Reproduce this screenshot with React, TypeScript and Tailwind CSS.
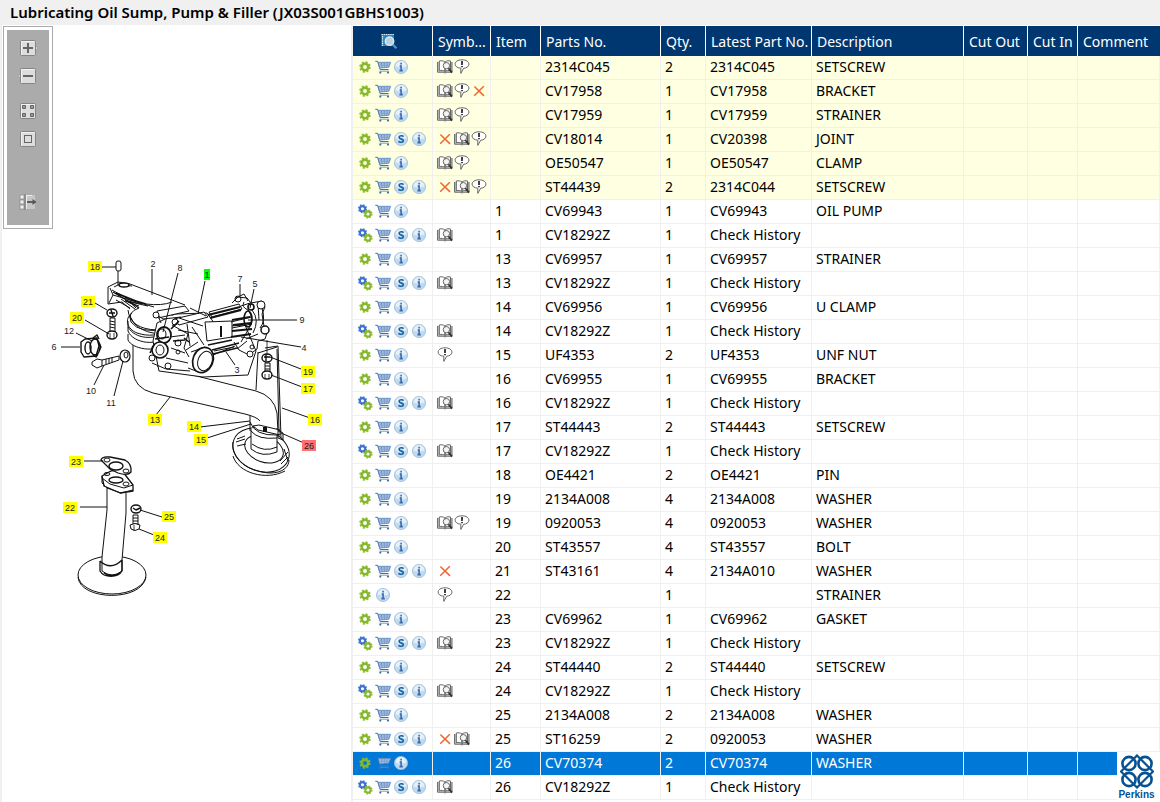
import type { ReactNode } from "react";

type Part = {
  actions: string;
  symbols?: string;
  item?: string;
  no: string;
  qty: string;
  latest: string;
  desc?: string;
  tone?: "note" | "selected";
};

// actions: g = gear, b = double gear, c = cart, s = supersession, i = info
// symbols: k = book, n = note, x = cross
const PARTS: Part[] = [
  { actions: "gci",  symbols: "kn",  no: "2314C045", qty: "2", latest: "2314C045", desc: "SETSCREW", tone: "note" },
  { actions: "gci",  symbols: "knx", no: "CV17958",  qty: "1", latest: "CV17958",  desc: "BRACKET",  tone: "note" },
  { actions: "gci",  symbols: "kn",  no: "CV17959",  qty: "1", latest: "CV17959",  desc: "STRAINER", tone: "note" },
  { actions: "gcsi", symbols: "xkn", no: "CV18014",  qty: "1", latest: "CV20398",  desc: "JOINT",    tone: "note" },
  { actions: "gci",  symbols: "kn",  no: "OE50547",  qty: "1", latest: "OE50547",  desc: "CLAMP",    tone: "note" },
  { actions: "gcsi", symbols: "xkn", no: "ST44439",  qty: "2", latest: "2314C044", desc: "SETSCREW", tone: "note" },
  { actions: "bci",  item: "1",  no: "CV69943",  qty: "1", latest: "CV69943", desc: "OIL PUMP" },
  { actions: "bcsi", symbols: "k", item: "1",  no: "CV18292Z", qty: "1", latest: "Check History" },
  { actions: "gci",  item: "13", no: "CV69957",  qty: "1", latest: "CV69957", desc: "STRAINER" },
  { actions: "bcsi", symbols: "k", item: "13", no: "CV18292Z", qty: "1", latest: "Check History" },
  { actions: "gci",  item: "14", no: "CV69956",  qty: "1", latest: "CV69956", desc: "U CLAMP" },
  { actions: "bcsi", symbols: "k", item: "14", no: "CV18292Z", qty: "1", latest: "Check History" },
  { actions: "gci",  symbols: "n", item: "15", no: "UF4353",   qty: "2", latest: "UF4353",  desc: "UNF NUT" },
  { actions: "gci",  item: "16", no: "CV69955",  qty: "1", latest: "CV69955", desc: "BRACKET" },
  { actions: "bcsi", symbols: "k", item: "16", no: "CV18292Z", qty: "1", latest: "Check History" },
  { actions: "gci",  item: "17", no: "ST44443",  qty: "2", latest: "ST44443", desc: "SETSCREW" },
  { actions: "bcsi", symbols: "k", item: "17", no: "CV18292Z", qty: "1", latest: "Check History" },
  { actions: "gci",  item: "18", no: "OE4421",   qty: "2", latest: "OE4421",  desc: "PIN" },
  { actions: "gci",  item: "19", no: "2134A008", qty: "4", latest: "2134A008", desc: "WASHER" },
  { actions: "gci",  symbols: "kn", item: "19", no: "0920053", qty: "4", latest: "0920053", desc: "WASHER" },
  { actions: "gci",  item: "20", no: "ST43557",  qty: "4", latest: "ST43557", desc: "BOLT" },
  { actions: "gcsi", symbols: "x", item: "21", no: "ST43161", qty: "4", latest: "2134A010", desc: "WASHER" },
  { actions: "gi",   symbols: "n", item: "22", no: "", qty: "1", latest: "", desc: "STRAINER" },
  { actions: "gci",  item: "23", no: "CV69962",  qty: "1", latest: "CV69962", desc: "GASKET" },
  { actions: "bcsi", symbols: "k", item: "23", no: "CV18292Z", qty: "1", latest: "Check History" },
  { actions: "gci",  item: "24", no: "ST44440",  qty: "2", latest: "ST44440", desc: "SETSCREW" },
  { actions: "bcsi", symbols: "k", item: "24", no: "CV18292Z", qty: "1", latest: "Check History" },
  { actions: "gci",  item: "25", no: "2134A008", qty: "2", latest: "2134A008", desc: "WASHER" },
  { actions: "gcsi", symbols: "xk", item: "25", no: "ST16259", qty: "2", latest: "0920053", desc: "WASHER" },
  { actions: "gci",  item: "26", no: "CV70374",  qty: "2", latest: "CV70374", desc: "WASHER", tone: "selected" },
  { actions: "bcsi", symbols: "k", item: "26", no: "CV18292Z", qty: "1", latest: "Check History" },
];

const HEADERS = ["Symb...", "Item", "Parts No.", "Qty.", "Latest Part No.", "Description", "Cut Out", "Cut In", "Comment"];

const CALLOUTS: [string, number, number, string?][] = [
  ["18", 95, 267, "#ff0"], ["21", 88, 302, "#ff0"], ["20", 77, 318, "#ff0"], ["13", 155, 420, "#ff0"],
  ["14", 194, 427, "#ff0"], ["15", 201, 440, "#ff0"], ["19", 308, 372, "#ff0"], ["17", 308, 389, "#ff0"],
  ["16", 315, 420, "#ff0"], ["26", 309, 446, "#ff7070"], ["23", 76, 462, "#ff0"], ["22", 70, 508, "#ff0"],
  ["25", 169, 517, "#ff0"], ["24", 160, 538, "#ff0"], ["1", 207, 275, "#0f0"],
  ["2", 153, 264], ["8", 180, 268], ["7", 240, 279], ["5", 255, 284], ["9", 302, 320], ["4", 304, 348],
  ["3", 237, 370], ["12", 69, 331], ["6", 54, 347], ["10", 91, 391], ["11", 111, 403],
];

function Icon({ children }: { children: ReactNode }) {
  return (
    <svg viewBox="0 0 16 16" className="size-4 shrink-0" aria-hidden="true">
      {children}
    </svg>
  );
}

function GearShape({ cx, cy, r, color }: { cx: number; cy: number; r: number; color: string }) {
  return (
    <g stroke={color}>
      <circle cx={cx} cy={cy} r={r * 0.58} fill="none" strokeWidth={r * 0.46} />
      <circle cx={cx} cy={cy} r={r * 0.88} fill="none" strokeWidth={r * 0.28} strokeDasharray={`${r * 0.36} ${r * 0.331}`} />
    </g>
  );
}

function InfoDisc({ children }: { children: ReactNode }) {
  return (
    <Icon>
      <circle cx="8" cy="8" r="6.6" fill="#bfdaef" stroke="#9dbddb" strokeWidth="0.8" />
      <path d="M2.6 7.4a5.4 5.4 0 0 1 10.8 0c-3.4 1.4-7 1.4-10.8 0z" fill="#e4f0fa" />
      {children}
    </Icon>
  );
}

function ActionIcon({ kind }: { kind: string }) {
  if (kind === "g") return <Icon><GearShape cx={8} cy={8} r={5.6} color="#87b82b" /></Icon>;
  if (kind === "b") {
    return (
      <Icon>
        <GearShape cx={5.5} cy={5.7} r={4.5} color="#3f72cf" />
        <GearShape cx={11} cy={11} r={4.5} color="#87b82b" />
      </Icon>
    );
  }
  if (kind === "c") {
    return (
      <Icon>
        <path d="M.3 2.3h2.3l2.6 8.200h8.400" fill="none" stroke="#44709f" strokeWidth="1" />
        <path d="M3.200 3.300h12.500l-1.900 4.900-9.200.8z" fill="#b4d0ee" stroke="#4d7dbd" strokeWidth="0.800" />
        <path d="M3.600 5h11.300M4.100 6.800h10.100M6.400 3.400l.5 5.300M9.200 3.400l.1 5M12.200 3.400l-.5 4.900" fill="none" stroke="#6483b5" strokeWidth="0.600" />
        <path d="M4.600 12.200h9.200" stroke="#6d93bd" strokeWidth="0.900" />
        <circle cx="5.300" cy="13.600" r="1.100" fill="#44709f" />
        <circle cx="13" cy="13.600" r="1.100" fill="#44709f" />
      </Icon>
    );
  }
  if (kind === "s") {
    return (
      <InfoDisc>
        <path d="M10.600 5.600C9.600 4.400 6.200 4.300 6.100 6.200c0 2.100 4.200 1.300 4.200 3.500-.1 2-3.500 1.900-4.800.7" fill="none" stroke="#17629b" strokeWidth="1.700" />
      </InfoDisc>
    );
  }
  return (
    <InfoDisc>
      <path d="M8.100 3.800v1.700M6.700 7.100h1.400v4.600M6.400 11.600h3.400" fill="none" stroke="#3d6ba8" strokeWidth="1.600" />
    </InfoDisc>
  );
}

function SymbolIcon({ kind }: { kind: string }) {
  if (kind === "x") {
    return (
      <Icon>
        <path d="M3.400 3.500l9.600 9.400M12.800 3.300l-9.600 9.400" stroke="#f2662d" strokeWidth="1.500" />
      </Icon>
    );
  }
  if (kind === "n") {
    return (
      <Icon>
        <path d="M8 .8c4.200 0 6.900 1.900 6.900 4.300 0 2.400-2.300 3.900-5.300 4.200L6.800 14.400V9.200C3.400 8.900 1.100 7.500 1.100 5.100 1.100 2.700 3.800.8 8 .8z" fill="#fff" stroke="#555" strokeWidth="0.900" />
        <path d="M8 2v4M8 6.900v1.400" stroke="#222" strokeWidth="1.700" />
      </Icon>
    );
  }
  return (
    <Icon>
      <path d="M.6 3v10.200h5.600l1.800.8 1.800-.8h5.200V3" fill="#ccc" stroke="#666" strokeWidth="1" />
      <path d="M2.300 2c2-.5 4-.3 5.700 1.100v9.300c-1.700-1-3.700-1.200-5.700-.8zM8 3.100c1.500-1.400 3.500-1.600 5.500-1.100v9.600c-2-.4-4-.2-5.500.8z" fill="#fff" stroke="#555" strokeWidth="0.900" />
      <circle cx="9.400" cy="6.700" r="3.200" fill="#f4f4f4" stroke="#666" strokeWidth="1" />
      <path d="M11.500 9.200l3.500 4.400" stroke="#333" strokeWidth="1.800" />
    </Icon>
  );
}

function PreviewIcon() {
  return (
    <svg viewBox="0 0 18 18" className="size-[18px]" aria-hidden="true">
      <path d="M1.500 2h12.500v12h-12.500z" fill="#2c86bd" />
      <path d="M1.500 2.500h12.500M2.500 4v10" stroke="#e4f2fa" strokeWidth="1.200" strokeDasharray="1.400 .8" />
      <circle cx="9.500" cy="9.200" r="4.200" fill="#b7d3e3" stroke="#e6e6e6" strokeWidth="1.400" />
      <path d="M12.800 12.600l3.600 3.700" stroke="#4c9ad0" strokeWidth="2.200" />
    </svg>
  );
}

function ToolButton({ label, className = "", children }: { label: string; className?: string; children: ReactNode }) {
  return (
    <button type="button" aria-label={label} className={`flex size-5 items-center justify-center ${className}`}>
      <svg viewBox="0 0 20 20" className="size-5" aria-hidden="true">
        {children}
      </svg>
    </button>
  );
}

function ToolFace() {
  return (
    <>
      <rect x="2.500" y="2.500" width="15" height="15" rx="1" fill="#ddd" stroke="#858585" />
      <path d="M3.500 16.500v-13h13" fill="none" stroke="#f2f2f2" />
    </>
  );
}

function Toolbar() {
  return (
    <div className="ml-px w-[50px] border border-[#ababab] bg-white p-[3px]">
      <div className="flex h-[195px] flex-col items-center bg-[#ababab] pt-2">
        <ToolButton label="Zoom in">
          <path d="M17 7.500l2.700 2.500-2.700 2.500z" fill="#eee" stroke="#888" strokeWidth="0.600" />
          <ToolFace />
          <path d="M5 10h10M10 5v10" stroke="#666" strokeWidth="2" />
        </ToolButton>
        <ToolButton label="Zoom out" className="mt-2">
          <path d="M3 7.500l-2.700 2.500 2.700 2.500z" fill="#eee" stroke="#888" strokeWidth="0.600" />
          <ToolFace />
          <path d="M5 10h10" stroke="#666" strokeWidth="2" />
        </ToolButton>
        <ToolButton label="Fit to window" className="mt-[15px]">
          <ToolFace />
          <path d="M4.500 4.500h3v3h-3zM12.500 4.500h3v3h-3zM4.500 12.500h3v3h-3zM12.500 12.500h3v3h-3z" fill="#999" stroke="#666" />
        </ToolButton>
        <ToolButton label="Actual size" className="mt-2">
          <ToolFace />
          <rect x="6.500" y="6.500" width="7" height="7" fill="#ddd" stroke="#666" />
        </ToolButton>
        <ToolButton label="Hide panel" className="mt-[43px]">
          <path d="M8 3h9v14H8z" fill="#c6c6c6" />
          <path d="M2 3h4v4H2zM2 8h4v4H2zM2 13h4v4H2z" fill="#eee" stroke="#888" strokeWidth="0.700" />
          <path d="M7 2v16" stroke="#777" />
          <path d="M8 3.500h6M8.500 3v14" stroke="#eee" />
          <path d="M9 10h6" stroke="#555" strokeWidth="1.800" />
          <path d="M14.500 7l4 3-4 3z" fill="#555" />
        </ToolButton>
      </div>
    </div>
  );
}

function Diagram() {
  return (
    <svg viewBox="50 250 280 350" className="mt-[21px] ml-12 h-[350px] w-[280px]" role="img" aria-label="Exploded parts diagram">
      <g fill="none" stroke="#111" strokeWidth="1" strokeLinejoin="round">
        {/* suction pipe 13 */}
        <path d="M133 345v26q1 17 20 22l27 6 65 15q12 3 15 7M157 366l99 25q18 5 21 22l1 20" fill="#fff" />
        {/* strainer foot */}
        <ellipse cx="261" cy="450" rx="29" ry="21" transform="rotate(20 261 450)" fill="#fff" />
        <path d="M233 456c5 17 33 25 52 15M233 442c-2 17 15 30 37 31 14 0 19-7 19-13" />
        <ellipse cx="264" cy="449" rx="20" ry="13" transform="rotate(20 264 449)" />
        <path d="M237 439l8-3M236 442l9-3M237 446l9-2M280 461l8-9M281 464l7-7M284 449l4 12" />
        <path d="M251 428v21q11 9 26 3v-24" fill="#fff" />
        <path d="M250 422q5 14 27 13M251 431q7 9 26 7M250 415v16M252 444q12 9 25 3" />
        <path d="M253 426l5 4 22 5v-5l-21-5z" fill="#fff" />
        <path d="M264 427v5M266 427v5" strokeWidth="2" />
        {/* bracket 16 */}
        <path d="M258 352l-2 38M265 348l13-2 3 92M277 349l2 83M258 353l19-6M278 430l5 3v7l-5-2z" />
        {/* pump body 2 */}
        <path d="M108 287l10-5 12 2 58 22 2 14-12 27-45-1-1-36-8-9-16 2z" fill="#fff" stroke="none" />
        <path d="M108 304v-17l10-5 12 2 55 21M108 304l14-2 8 7" />
        <path d="M110 288l3 7 41 12M113 295l-4 8M122 283l-8 4M112 290l18 10 9 2M116 300l14 8M121 299l14 10M125 301l14 5M122 285l10 1" />
        <path d="M113 292l20 12 6 4M116 293l20 8 10 3" strokeWidth="1.400" />
        <path d="M125 300q8 4 11 8M128 301l14 3M130 302l18 4M128 310q2 19 29 20M130 316q5 15 28 18" />
        <ellipse cx="124" cy="285" rx="5" ry="2" fill="#fff" strokeWidth="1.500" />
        <path d="M132 313c-8 6-5 16 5 20 12 4 22 2 28-2M128 321v10c5 13 32 16 39 3M128 327c7 12 26 14 39 4M128 334v6c4 9 27 13 38 4" />
        <path d="M139 308q-12 4-8 14 9 12 33 7M146 304q16 2 26-2" />
        {/* pump housing */}
        <path d="M153 341l4-18 18-9 32-1 10 14 28-2 11 26-8 24-45 2-44-6z" fill="#fff" />
        <path d="M157 311l28-5 4 5-31 7zM174 319l30-7 4 5-29 8zM154 313l9 6 18-2M159 318l2 5M179 318l24 8M190 308l16 8" fill="#fff" />
        <circle cx="156" cy="315" r="3" fill="#fff" /><circle cx="175" cy="322" r="3" fill="#fff" />
        <ellipse cx="164" cy="335" rx="7" ry="8" fill="#fff" strokeWidth="1.800" />
        <ellipse cx="162" cy="334" rx="4" ry="5" />
        <ellipse cx="160" cy="350" rx="8" ry="8" fill="#fff" strokeWidth="1.600" />
        <ellipse cx="160" cy="350" rx="4" ry="5" />
        <circle cx="152" cy="358" r="3" fill="#fff" /><circle cx="168" cy="366" r="3" fill="#fff" />
        <circle cx="178" cy="343" r="3" /><circle cx="178" cy="352" r="2" />
        <path d="M152 363l14 6 24 2M172 325l16 9-4 14 5 9M170 337l15-2M171 348l14 5M187 324l3 22M192 327l12 18M178 330l20 4M186 350l12-8M166 358l22 5" />
        <path d="M155 339l14-2M154 345l-4 8M171 329l8-8M173 341l12-1M184 338l5 4" strokeWidth="1.600" />
        <ellipse cx="203" cy="360" rx="10" ry="13" transform="rotate(22 203 360)" fill="#fff" strokeWidth="1.700" />
        <ellipse cx="205" cy="361" rx="7" ry="10" transform="rotate(22 205 361)" />
        <path d="M191 352l14-5M196 371l-8-3M213 355l22-9M214 351l20-4" />
        {/* rotor and end plate */}
        <path d="M205 322l27-1v16l-25 4z" fill="#fff" />
        <path d="M221 326v11" strokeWidth="2" />
        <path d="M208 315l32-8M210 318l31-8M232 320l18-3M233 325l18-2M232 331l20-2M231 337l20-3" strokeWidth="2" />
        <path d="M231 322l20-5M232 328l20-4M209 312l30-8 3 5-30 8z" />
        <path d="M232 303l6-6 9 1 4 5 11-2 3 6-3 7 2 12 4 4-3 9-7 2-1 8-8 6-10-5-5-8" />
        <path d="M244 302q-3 5 4 8 7 9 0 20l-7 12M252 310q8 10 1 23M258 304l1 16M262 308q4 13-2 20M241 306l9-3M246 339l12-5M236 298l8-4 4 7M237 349l10-8" />
        <circle cx="238" cy="299" r="3" /><circle cx="251" cy="307" r="3" strokeWidth="1.600" /><circle cx="261" cy="305" r="4" fill="#fff" />
        <circle cx="265" cy="330" r="4" fill="#fff" strokeWidth="1.500" /><circle cx="250" cy="354" r="3" fill="#fff" /><circle cx="252" cy="347" r="2" />
        <ellipse cx="248" cy="319" rx="4" ry="8" strokeWidth="1.600" />
        <path d="M213 354l24-6M212 350l27-7M208 345l24-5" strokeWidth="1.500" />
        {/* small hardware */}
        <rect x="116" y="261" width="5" height="10" rx="2" fill="#fff" />
        <path d="M118 271v14" />
        <g strokeWidth="1.400">
          <ellipse cx="112" cy="313" rx="5" ry="4" fill="#fff" /><path d="M109 313h6M111 310l2 6" />
          <path d="M110 318v14h5v-14zM110 321l5 1M110 324l5 1M110 327l5 1" strokeWidth="1" />
          <ellipse cx="112" cy="335" rx="5" ry="4" fill="#fff" /><path d="M110 333v5M114 333v5" strokeWidth="0.800" />
          <path d="M81 342l4-3 12-1 2 8-3 10-12 1-3-5z" fill="#fff" />
          <ellipse cx="88" cy="348" rx="3" ry="6" /><ellipse cx="95" cy="347" rx="5" ry="8" /><path d="M93 338l4-3 2 4M93 355l3 2 2-3M99 343l2 4-2 4" />
          <path d="M92 362l5-3 5 1 17-4v4l-17 6-5 2-5-3zM102 360v6M106 359v5M109 358v5M112 357v5" strokeWidth="1" />
          <ellipse cx="125" cy="356" rx="5" ry="6" fill="#fff" strokeWidth="1.200" /><ellipse cx="126" cy="355" rx="2" ry="3" strokeWidth="1" />
          <ellipse cx="267" cy="358" rx="5" ry="4" fill="#fff" /><path d="M264 357h6M266 355v6" />
          <path d="M265 363v9h5v-9zM265 366h5M265 369h5" strokeWidth="1" />
          <ellipse cx="267" cy="375" rx="5" ry="4" fill="#fff" /><path d="M267 340v15M265 374v4M269 374v4" strokeWidth="0.800" />
          <ellipse cx="136" cy="509" rx="5" ry="4" fill="#fff" /><path d="M133 508l3 2 4-2" />
          <path d="M133 515v9h5v-9zM133 518h5M133 521h5" strokeWidth="1" />
          <path d="M130 525q5-3 10 0l-1 4q-4 3-8 0z" fill="#fff" strokeWidth="1" /><path d="M134 525v6" strokeWidth="0.800" />
        </g>
        {/* strainer 22 and gasket 23 */}
        <ellipse cx="112" cy="575" rx="34" ry="19" fill="#fff" />
        <path d="M78 577c2 24 64 25 68 0" />
        <path d="M107 485v25l-5 47v14q10 8 20 0v-11l4-47v-20" fill="#fff" />
        <path d="M100 561v10c4 7 18 7 22 0v-11M100 561q11 10 22-1M104 573q8 5 16 0" strokeWidth="1.300" />
        <path d="M102 476l7-4q4-3 14 0l10 13v6l-13 2-16-7z" fill="#fff" strokeWidth="1.300" />
        <path d="M102 476v7l5 5 14 5 12-3M102 478l8 6 14 4 9-3" />
        <path d="M101 460q1-4 9-3l15 3q7 4 6 12-3 4-13 1l-8-4z" fill="#fff" strokeWidth="1.300" />
        <ellipse cx="107" cy="460" rx="3" ry="2" /><ellipse cx="116" cy="466" rx="7" ry="4" strokeWidth="1.400" /><ellipse cx="126" cy="471" rx="3" ry="2" />
        <ellipse cx="116" cy="480" rx="7" ry="3" strokeWidth="1.400" /><ellipse cx="126" cy="484" rx="3" ry="2" /><ellipse cx="107" cy="474" rx="3" ry="1.500" />
        {/* leader lines */}
        <path d="M102 267h14M95 303l12 7M85 320l24 14M76 333l16 8M61 347h19M94 385l10-20M114 396l9-35M152 269v26M178 273l-15 59M205 281l-7 33M240 284v12M254 289l-4 19M248 320h49M241 337l60 10M226 352l9 13M270 357l31 12M271 375l31 12M282 408l28 10M281 433l23 10M156 415l14-18M200 427l50-6M207 438l44-14M84 461h19M80 507h27M140 510l22 7M139 529l15 6" />
      </g>
      <g fontFamily="Liberation Sans, Arial, sans-serif" fontSize="9" textAnchor="middle">
        {CALLOUTS.map(([label, x, y, fill]) => (
          <g key={label}>
            {fill && <rect x={label === "1" ? x - 3 : x - 7} y={y - 6} width={label === "1" ? 6 : 14} height="11" fill={fill} />}
            <text x={x} y={y + 3} fill="#222">{label}</text>
          </g>
        ))}
      </g>
    </svg>
  );
}

function PerkinsLogo() {
  return (
    <div className="absolute right-0 bottom-0 flex h-[50px] w-[43px] flex-col items-center bg-white pr-1 pt-0.5">
      <svg viewBox="0 0 34 35" className="h-[35px] w-[34px] shrink-0" aria-hidden="true">
        <g fill="none" stroke="#075192" strokeWidth="2.600">
          <circle cx="9" cy="9.500" r="6.600" />
          <circle cx="25" cy="9.500" r="6.600" />
          <circle cx="9" cy="25.500" r="6.600" />
          <circle cx="25" cy="25.500" r="6.600" />
          <path d="M17 1.500l16 16-16 16-16-16z" strokeWidth="2.200" />
        </g>
      </svg>
      <span className="font-['Liberation_Sans',sans-serif] text-[10px] leading-3 font-bold text-[#075192]">Perkins</span>
    </div>
  );
}

function PartRow({ part }: { part: Part }) {
  const selected = part.tone === "selected";
  const tone = selected ? "bg-[#0078d7] text-white" : part.tone === "note" ? "bg-[#ffffe1]" : "bg-white";
  const cells = [part.item, part.no, part.qty, part.latest, part.desc, "", "", ""];

  return (
    <tr className={`h-6 ${tone}`} aria-selected={selected}>
      <td className="border-r border-b border-[#f0f0f0] px-0 pt-0 pb-0.5">
        <div className="flex gap-0.5 pl-1">
          {part.actions.split("").map((kind) => <ActionIcon key={kind} kind={kind} />)}
        </div>
      </td>
      <td className="border-r border-b border-[#f0f0f0] px-0 pt-0 pb-0.5">
        <div className="flex gap-px pl-1">
          {part.symbols?.split("").map((kind) => <SymbolIcon key={kind} kind={kind} />)}
        </div>
      </td>
      {cells.map((cell, i) => (
        <td key={i} className="truncate border-r border-b border-[#f0f0f0] pt-0 pr-0 pb-0.5 pl-1">{cell}</td>
      ))}
    </tr>
  );
}

export default function App() {
  return (
    <div className="relative flex min-h-screen flex-col overflow-hidden bg-[#f0f0f0] font-['Noto_Sans','Segoe_UI',sans-serif] text-sm text-black">
      <h1 className="h-[25px] pl-[10px] text-[15px] leading-[25px] font-semibold">
        Lubricating Oil Sump, Pump &amp; Filler (JX03S001GBHS1003)
      </h1>
      <div className="flex flex-1">
        <aside className="ml-0.5 w-[349px] shrink-0 bg-white pt-px">
          <Toolbar />
          <Diagram />
        </aside>
        <main className="ml-0.5 min-w-0 flex-1 bg-white pt-px">
          <table className="w-full table-fixed border-separate border-spacing-0">
            <colgroup>
              <col className="w-[80px]" />
              <col className="w-[58px]" />
              <col className="w-[50px]" />
              <col className="w-[120px]" />
              <col className="w-[45px]" />
              <col className="w-[106px]" />
              <col className="w-[152px]" />
              <col className="w-[64px]" />
              <col className="w-[50px]" />
              <col />
            </colgroup>
            <thead>
              <tr className="h-[30px] bg-[#003770] text-white">
                <th className="border-r border-white p-0" aria-label="Actions">
                  <div className="flex justify-center pr-2"><PreviewIcon /></div>
                </th>
                {HEADERS.map((header) => (
                  <th key={header} className="border-r border-white pt-0.5 pr-0 pb-0 pl-[5px] text-left font-normal whitespace-nowrap last:border-r-0">
                    {header}
                  </th>
                ))}
              </tr>
            </thead>
            <tbody>
              {PARTS.map((part, i) => <PartRow key={i} part={part} />)}
            </tbody>
          </table>
        </main>
      </div>
      <PerkinsLogo />
    </div>
  );
}
